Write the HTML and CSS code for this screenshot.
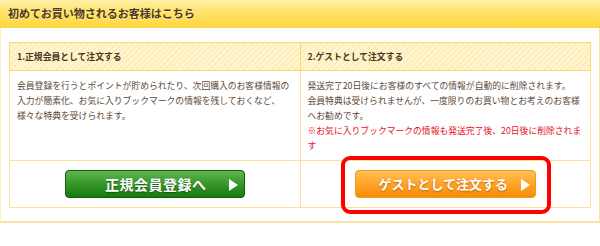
FILE: index.html
```html
<!DOCTYPE html>
<html lang="ja">
<head>
    <meta charset="UTF-8">
    <title>初めてお買い物されるお客様</title>
    <link rel="stylesheet" href="styles.css">
</head>
<body>

<div class="guide">
    <h2 class="guide-title">初めてお買い物されるお客様はこちら</h2>

    <div class="guide-body">
        <table class="guide-table">
            <tr>
                <th>1.正規会員として注文する</th>
                <th>2.ゲストとして注文する</th>
            </tr>
            <tr>
                <td>
                    会員登録を行うとポイントが貯められたり、次回購入のお客様情報の<br>
                    入力が簡素化、お気に入りブックマークの情報を残しておくなど、<br>
                    様々な特典を受けられます。
                </td>
                <td>
                    発送完了20日後にお客様のすべての情報が自動的に削除されます。<br>
                    会員特典は受けられませんが、一度限りのお買い物とお考えのお客様<br>
                    へお勧めです。<br>
                    <span class="note">※お気に入りブックマークの情報も発送完了後、20日後に削除されま<br>す</span>
                </td>
            </tr>
            <tr>
                <td class="btn-cell">
                    <a href="#" class="btn btn-member">正規会員登録へ<span class="arrow"></span></a>
                </td>
                <td class="btn-cell">
                    <a href="#" class="btn btn-guest">ゲストとして注文する<span class="arrow"></span></a>
                </td>
            </tr>
        </table>
    </div>
</div>

</body>
</html>
```

FILE: styles.css
```css
body {
    margin: 0;
    background-color: #fff;
    font-family: "Noto Sans CJK JP", "Noto Sans", sans-serif;
    color: #5b4a3a;
}
.guide {
    width: 598px;
    background-color: #fff;
    border-left: 1px solid #fcecc0;
    border-right: 1px solid #fbe3a2;
    border-bottom: 2px solid #fbe3a2;
    box-shadow: 0 2px 3px rgba(0, 0, 0, 0.06);
}
.guide-title {
    margin: 0 -1px;
    height: 27px;
    padding-left: 8px;
    line-height: 27px;
    font-size: 11px;
    font-weight: bold;
    color: #4d3818;
    text-shadow: 0 1px 0 rgba(255, 255, 255, 0.5);
    background: linear-gradient(to bottom, #fff0a8 0%, #ffe26a 45%, #ffd83c 100%);
    border-bottom: 1px solid #f6d25a;
}
.guide-body {
    padding: 14px 8px 13px 8px;
}
.guide-table {
    width: 582px;
    border-collapse: collapse;
    table-layout: fixed;
}
.guide-table th,
.guide-table td {
    border: 1px solid #fce196;
    text-align: left;
    vertical-align: top;
}
.guide-table th {
    height: 27px;
    padding: 0 7px;
    font-size: 8.8px;
    font-weight: bold;
    color: #4a3520;
    vertical-align: middle;
    background-color: #fff5d2;
    background-image: repeating-linear-gradient(135deg, #fff7dc 0, #fff7dc 2px, #ffecb0 2px, #ffecb0 4px);
    border-color: #fcd978;
}
.guide-table td {
    padding: 7px 7px 7px 7px;
    font-size: 8.8px;
    line-height: 15px;
    white-space: nowrap;
}
.note {
    color: #e8101e;
}
.guide-table td.btn-cell {
    height: 46px;
    padding: 0;
    text-align: center;
    vertical-align: middle;
}
.btn {
    position: relative;
    display: inline-block;
    box-sizing: border-box;
    height: 28px;
    line-height: 26px;
    border-radius: 4px;
    color: #fff;
    font-weight: bold;
    text-decoration: none;
    vertical-align: middle;
}
.btn-member {
    width: 180px;
    padding-left: 2px;
    font-size: 14px;
    letter-spacing: 0.5px;
    background: linear-gradient(to bottom, #5fb550 0%, #3a9a2c 45%, #167a10 100%);
    border: 1px solid #0f5e0a;
    text-shadow: 0 1px 1px rgba(0, 0, 0, 0.4);
}
.btn-guest {
    width: 181px;
    padding-right: 4px;
    font-size: 13px;
    background: linear-gradient(to bottom, #ffbf55 0%, #ffa42a 50%, #f68c05 100%);
    border: 1px solid #f29a1a;
    text-shadow: 0 1px 2px rgba(150, 70, 0, 0.6);
}
/* red highlight frame drawn over the guest button */
.btn-guest::after {
    content: "";
    position: absolute;
    top: -15px;
    left: -15px;
    right: -16px;
    bottom: -17px;
    border: 4px solid #f00;
    border-radius: 9px;
}
.arrow {
    position: absolute;
    top: 8px;
    right: 6px;
    width: 0;
    height: 0;
    border-top: 6px solid transparent;
    border-bottom: 6px solid transparent;
    border-left: 9px solid #fff;
}
.btn-guest .arrow {
    right: 5px;
}
```
